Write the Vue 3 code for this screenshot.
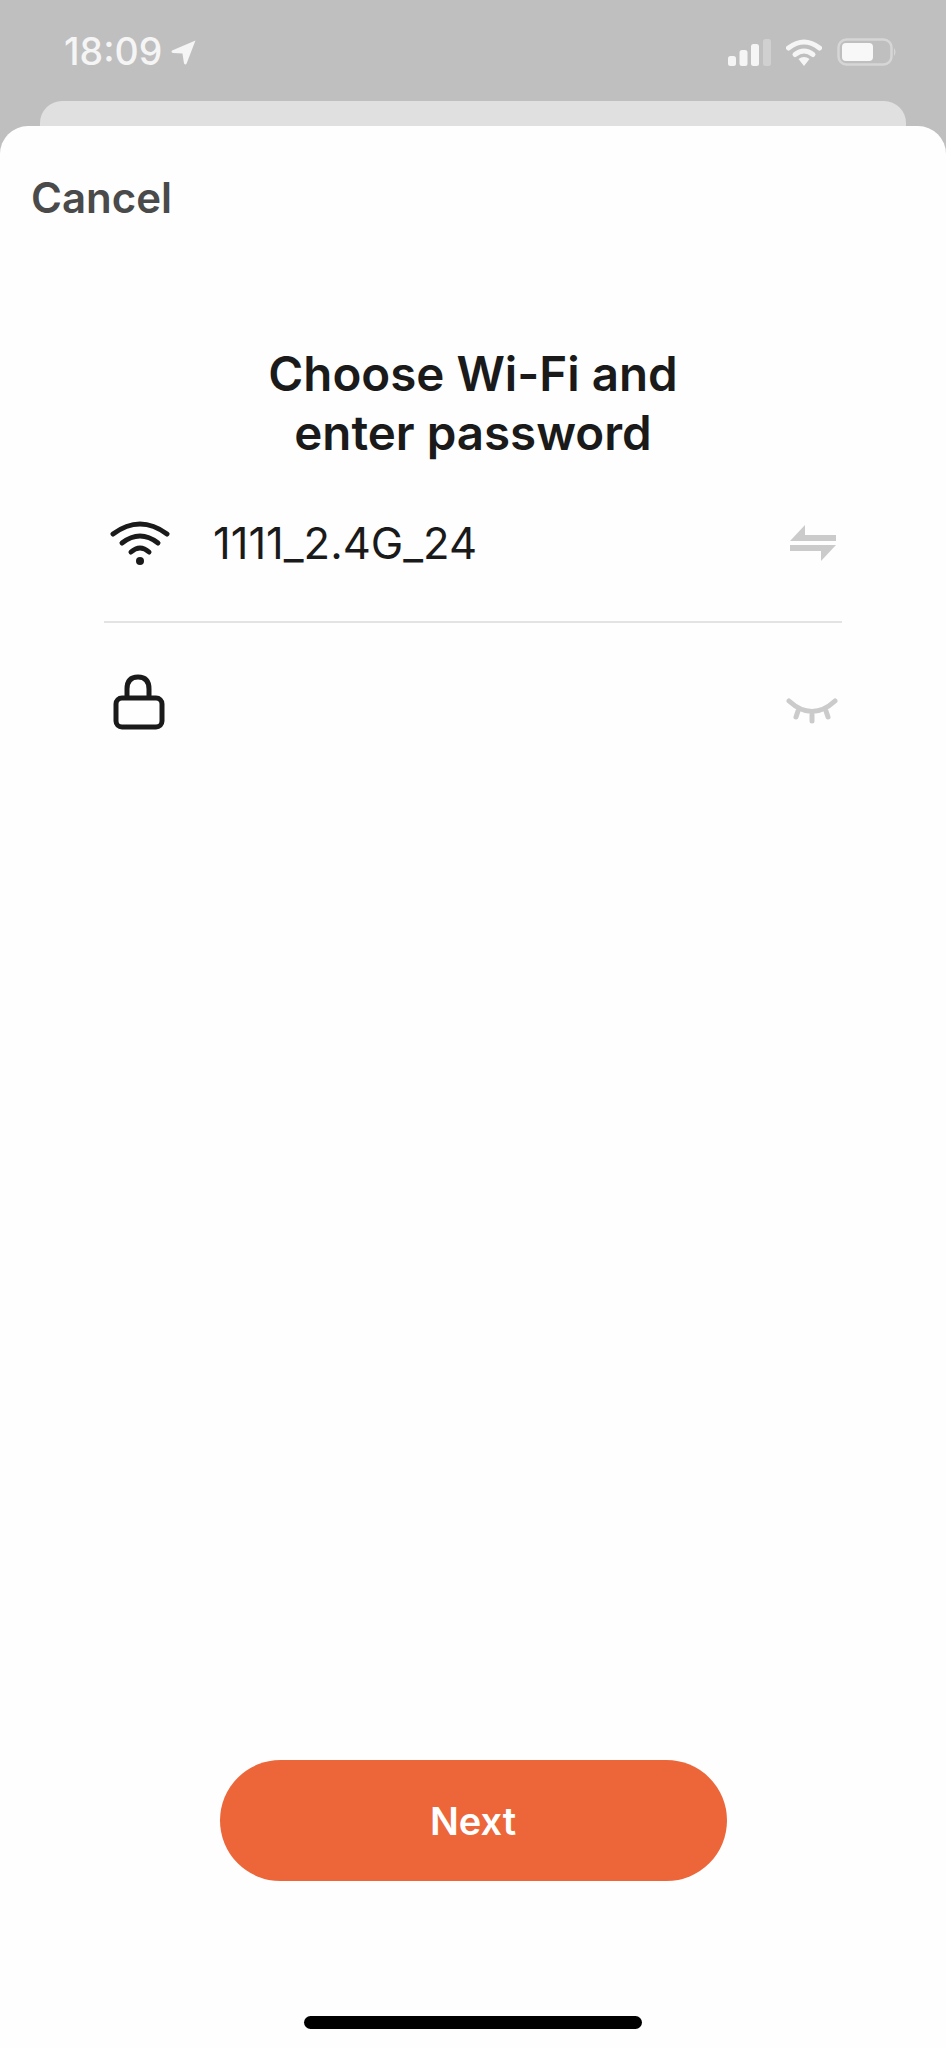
<script setup>
const ssid = '1111_2.4G_24'
</script>

<template>
  <div class="pantalla">
    <div class="status">
      <div class="hora">
        <span>18:09</span>
        <svg class="flecha" width="25" height="25" viewBox="0 0 24 24">
          <path d="M23.5 0.5 L1 10 Q-0.5 12 2 12.5 L11 13 L12.5 22.5 Q14 24.5 15 22.5 Z" fill="#f5f5f5" />
        </svg>
      </div>
      <div class="status-iconos">
        <svg width="43" height="27" viewBox="0 0 43 27">
          <rect x="0" y="17" width="8" height="10" rx="2.5" fill="#f5f5f5" />
          <rect x="11.5" y="11" width="8" height="16" rx="2.5" fill="#f5f5f5" />
          <rect x="23" y="5" width="8" height="22" rx="2.5" fill="#f5f5f5" />
          <rect x="35" y="0" width="8" height="27" rx="2.5" fill="#d0d0d0" />
        </svg>
        <svg width="36" height="27" viewBox="0 0 36 27">
          <path d="M2.5 9 Q18 -3 33.5 9" fill="none" stroke="#f5f5f5" stroke-width="5" stroke-linecap="round" />
          <path d="M9 15.5 Q18 8.5 27 15.5" fill="none" stroke="#f5f5f5" stroke-width="5" stroke-linecap="round" />
          <path d="M12.5 20 Q18 16 23.5 20 L18 27 Z" fill="#f5f5f5" />
        </svg>
        <svg width="60" height="28" viewBox="0 0 60 28">
          <rect x="1.5" y="1.5" width="53" height="25" rx="8" fill="none" stroke="#d6d6d6" stroke-width="2.5" />
          <rect x="5" y="5" width="31" height="18" rx="4" fill="#f8f8f8" />
          <path d="M57 10 Q60 14 57 18 Z" fill="#d6d6d6" />
        </svg>
      </div>
    </div>
    <div class="tarjeta-atras"></div>

    <div class="hoja">
      <div class="cancelar">Cancel</div>
      <h1 class="titulo">Choose Wi-Fi and<br />enter password</h1>

      <div class="fila fila-wifi">
        <svg class="icono" width="60" height="46" viewBox="0 0 60 46">
          <path d="M3 14 Q30 -6 57 14" fill="none" stroke="#1a1a1a" stroke-width="5" stroke-linecap="round" />
          <path d="M12 23 Q30 9 48 23" fill="none" stroke="#1a1a1a" stroke-width="5" stroke-linecap="round" />
          <path d="M21 32 Q30 24 39 32" fill="none" stroke="#1a1a1a" stroke-width="5" stroke-linecap="round" />
          <circle cx="30" cy="41" r="4" fill="#1a1a1a" />
        </svg>
        <span class="red">{{ ssid }}</span>
        <svg class="accion" width="46" height="36" viewBox="0 0 46 36">
          <path d="M0 16 L15 0 L15 10 L46 10 L46 16 Z" fill="#cbcbcb" />
          <path d="M0 20 L46 20 L31 36 L31 26 L0 26 Z" fill="#cbcbcb" />
        </svg>
      </div>

      <div class="fila fila-clave">
        <svg class="icono" width="60" height="56" viewBox="0 0 60 56">
          <path d="M17 24 V15 Q17 3 28 3 Q39 3 39 15 V24" fill="none" stroke="#1a1a1a" stroke-width="5" />
          <rect x="6" y="24" width="46" height="29" rx="6" fill="none" stroke="#1a1a1a" stroke-width="5" />
        </svg>
        <svg class="accion accion-ojo" width="52" height="26" viewBox="0 0 52 26">
          <g fill="none" stroke="#cbcbcb" stroke-width="5" stroke-linecap="round">
            <path d="M3 3 Q26 24 49 3" />
            <path d="M12 13 L10 19" />
            <path d="M26 17 V23" />
            <path d="M40 13 L42 19" />
          </g>
        </svg>
      </div>

      <button class="btn-siguiente">Next</button>
      <div class="home"></div>
    </div>
  </div>
</template>

<style scoped>
.pantalla {
  height: 2048px;
  display: flex;
  flex-direction: column;
  background-color: #bfbfbf;
  font-family: Inter, "Liberation Sans", sans-serif;
  overflow: hidden;
}

.status {
  height: 101px;
  box-sizing: border-box;
  padding: 30px 49px 0 64px;
  display: flex;
  justify-content: space-between;
  align-items: flex-start;
}

.hora {
  display: flex;
  align-items: center;
  gap: 9px;
  color: #f5f5f5;
  font-size: 37.5px;
  font-weight: 500;
  line-height: 44px;
}

.status-iconos {
  display: flex;
  align-items: center;
  gap: 15px;
  height: 44px;
}

.tarjeta-atras {
  height: 25px;
  margin: 0 40px;
  background-color: #e0e0e0;
  border-radius: 22px 22px 0 0;
}

.hoja {
  flex: 1;
  display: flex;
  flex-direction: column;
  background-color: #fefefe;
  border-radius: 28px 28px 0 0;
}

.cancelar {
  margin: 47px 0 0 31px;
  color: #4a4a4a;
  font-size: 42px;
  font-weight: 600;
  line-height: 50px;
}

.titulo {
  margin: 121px 0 0;
  color: #1a1a1a;
  font-size: 47.5px;
  font-weight: 600;
  line-height: 59px;
  text-align: center;
}

.fila {
  display: flex;
  align-items: center;
  margin: 0 104px;
  position: relative;
}

.fila-wifi {
  margin-top: 50px;
  height: 111px;
  padding: 0 6px 47px 6px;
  box-sizing: border-box;
  border-bottom: 2px solid #e3e3e3;
}

.fila-clave {
  margin-top: 51px;
  padding: 0 6px;
}

.icono {
  flex-shrink: 0;
}

.red {
  margin-left: 43px;
  color: #1a1a1a;
  font-size: 43.5px;
  line-height: 46px;
}

.accion {
  margin-left: auto;
}

.accion-ojo {
  margin-top: 18px;
  margin-right: -2px;
}

.btn-siguiente {
  margin: auto auto 0;
  width: 507px;
  height: 121px;
  border: none;
  border-radius: 61px;
  background-color: #ec663a;
  color: #fff;
  font-family: inherit;
  font-size: 38px;
  font-weight: 600;
}

.home {
  width: 338px;
  height: 13px;
  margin: 135px auto 19px;
  border-radius: 7px;
  background-color: #000;
}
</style>
